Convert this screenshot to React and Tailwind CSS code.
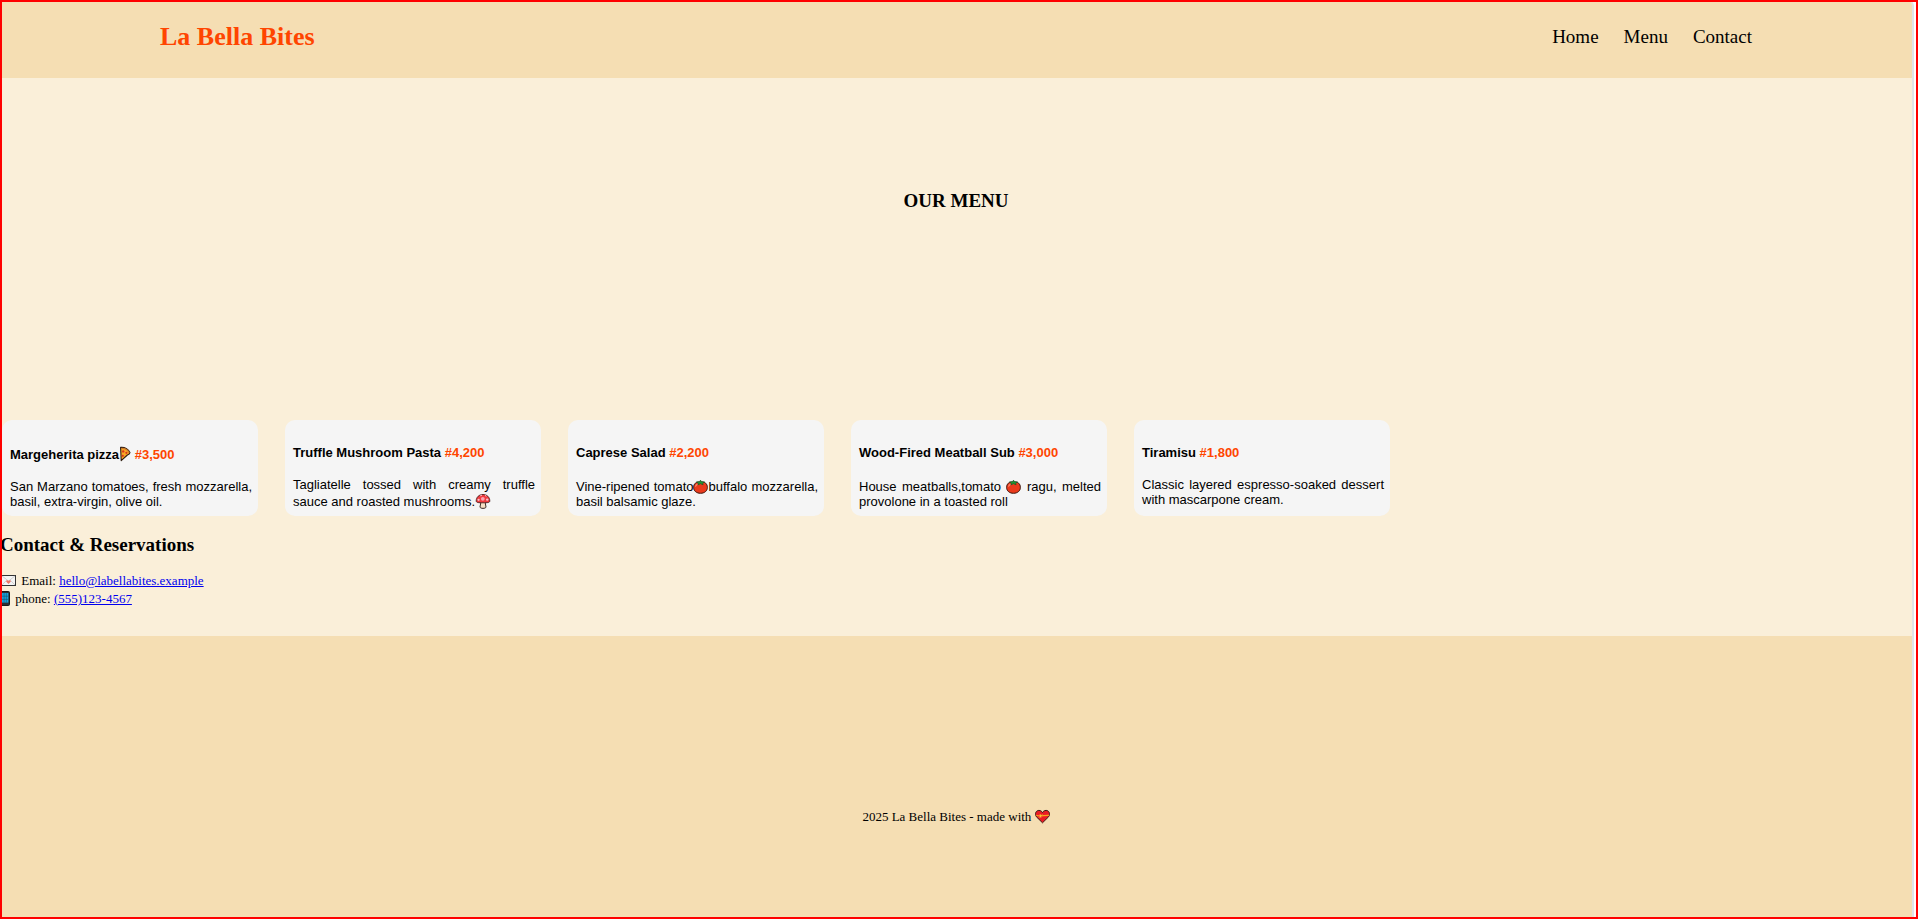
import React from "react";

function Pizza() {
  return (
    <svg viewBox="0 -1 12 17" className="inline h-[17px] w-[12px] align-[-3px]" aria-hidden="true">
      <path d="M1.6 1.4 C5.4 1 9.6 2.8 11 6.6 C10.6 8 9.6 8.6 8.4 9 L2.2 14.6 Z" fill="#f9a825" stroke="#2b1a10" strokeWidth="1.1" strokeLinejoin="round" />
      <path d="M2.4 2.4 C6 2.2 9 3.8 10.2 6.8" fill="none" stroke="#c9772a" strokeWidth="1.2" />
      <circle cx="4.2" cy="5.4" r="1.2" fill="#d8341c" />
      <circle cx="7.4" cy="6.8" r="1.1" fill="#d8341c" />
      <circle cx="3.8" cy="9.8" r="1.1" fill="#d8341c" />
    </svg>
  );
}

function Mushroom() {
  return (
    <svg viewBox="0 -1 16 17" className="inline h-[17px] w-[16px] align-[-3px]" aria-hidden="true">
      <path d="M6 8.5 L5 14 C5 15.8 11 15.8 11 14 L10 8.5 Z" fill="#f6dfc4" stroke="#3a2a24" strokeWidth="1" />
      <path d="M1.2 8 C1.2 4 4.2 1.5 8 1.5 C11.8 1.5 14.8 4 14.8 8 C14.8 9.6 12.6 9.8 8 9.8 C3.4 9.8 1.2 9.6 1.2 8 Z" fill="#f03a3e" stroke="#4a2020" strokeWidth="0.9" />
      <circle cx="7.8" cy="5.8" r="1.9" fill="#f9a3b0" />
      <circle cx="3.6" cy="6.8" r="1.1" fill="#f9c3cb" />
      <circle cx="12.2" cy="6.6" r="1.2" fill="#f9c3cb" />
      <path d="M5.2 2.8 L7 2.2 M10 2.4 L11.4 3.2" stroke="#f9c3cb" strokeWidth="1" />
    </svg>
  );
}

function Tomato() {
  return (
    <svg viewBox="0.5 -1.5 15 17" className="inline h-[17px] w-[15px] align-[-3px]" aria-hidden="true">
      <path d="M8 3.6 C12.6 2.8 14.9 5.6 14.9 8.9 C14.9 12.4 12 14.8 8 14.8 C4 14.8 1.1 12.4 1.1 8.9 C1.1 5.6 3.4 2.8 8 3.6 Z" fill="#ea3a1c" stroke="#3c1a12" strokeWidth="1" />
      <path d="M3.2 7.6 C3.6 6.4 4.2 6 5 5.8" fill="none" stroke="#ff8d70" strokeWidth="1.2" strokeLinecap="round" />
      <path d="M8 1.6 L8.8 3.2 L12 3.4 L10.2 4.8 L10.6 6.4 L8 5.2 L5.4 6.4 L5.8 4.8 L4 3.4 L7.2 3.2 Z" fill="#1f9a35" stroke="#174d20" strokeWidth="0.6" />
    </svg>
  );
}

function Envelope() {
  return (
    <svg viewBox="0 0 18 17" className="inline h-[17px] w-[18px] align-[-4px]" aria-hidden="true">
      <rect x="1.5" y="3.5" width="14" height="10" fill="#f4f4f4" stroke="#333" strokeWidth="1" />
      <path d="M2 4 L8.5 9 L15 4 M2 13 L6.5 8.4 M15 13 L10.5 8.4" fill="none" stroke="#c9c9c9" strokeWidth="0.9" />
      <path d="M8.5 12 L6.3 9.8 C5.7 8.4 7.5 7.6 8.5 8.8 C9.5 7.6 11.3 8.4 10.7 9.8 Z" fill="#ef7564" />
    </svg>
  );
}

function Phone() {
  return (
    <svg viewBox="0 0 12 17" className="inline h-[17px] w-[12px] align-[-4px]" aria-hidden="true">
      <rect x="0.5" y="1.5" width="9" height="14" rx="1" fill="#2b2f33" stroke="#1b1b1b" />
      <rect x="2" y="3" width="6.4" height="9.6" fill="#18a4dc" />
      <path d="M4.1 3 V12.6 M6.3 3 V12.6 M2 6.2 H8.4 M2 9.4 H8.4" stroke="#17526e" strokeWidth="0.6" />
    </svg>
  );
}

function Heart() {
  return (
    <svg viewBox="0.5 0 15 17" className="inline h-[17px] w-[15px] align-[-4px]" aria-hidden="true">
      <path d="M8 14.8 L1.9 8.8 C-0.2 5.6 1.6 2.4 4.4 2.4 C6.2 2.4 7.4 3.4 8 4.6 C8.6 3.4 9.8 2.4 11.6 2.4 C14.4 2.4 16.2 5.6 14.1 8.8 Z" fill="#ea1c24" stroke="#3a1a14" strokeWidth="1" strokeLinejoin="round" />
      <path d="M1.8 7.2 C5 9 10 7 14.4 7.4" fill="none" stroke="#f5a81c" strokeWidth="1.3" />
      <path d="M5.6 6 L6.4 9.8 M4.6 9.6 L7.8 6.4" stroke="#ffcf3a" strokeWidth="0.8" />
    </svg>
  );
}

const dishes = [
  {
    name: <>Margeherita pizza<Pizza /></>,
    price: "#3,500",
    text: "San Marzano tomatoes, fresh mozzarella, basil, extra-virgin, olive oil.",
  },
  {
    name: "Truffle Mushroom Pasta",
    price: "#4,200",
    text: <>Tagliatelle tossed with creamy truffle sauce and roasted mushrooms.<Mushroom /></>,
  },
  {
    name: "Caprese Salad",
    price: "#2,200",
    text: <>Vine-ripened tomato<Tomato />buffalo mozzarella, basil balsamic glaze.</>,
  },
  {
    name: "Wood-Fired Meatball Sub",
    price: "#3,000",
    text: <>House meatballs,tomato <Tomato /> ragu, melted provolone in a toasted roll</>,
  },
  {
    name: "Tiramisu",
    price: "#1,800",
    text: "Classic layered espresso-soaked dessert with mascarpone cream.",
  },
];

function DishCard({ dish }) {
  return (
    <article className="w-64 rounded-[10px] bg-[#f5f5f5] pt-[25px] pr-1.5 pb-[7px] pl-2 font-['Liberation_Sans',Arial,sans-serif] text-[13px] leading-[15px]">
      <h3 className="mb-[17px] font-bold">
        {dish.name} <span className="text-[#ff4500]">{dish.price}</span>
      </h3>
      <p className="text-justify">{dish.text}</p>
    </article>
  );
}

export default function App() {
  return (
    <div className="min-h-screen bg-white pr-1 font-['Liberation_Serif','Times_New_Roman',serif] text-black">
      <div className="flex min-h-screen flex-col overflow-hidden rounded-tr-md border-r-2 border-[#e3e3e6] bg-[#faefd9]">
        <header className="flex items-start justify-between bg-[#f5deb3] px-40 pt-[22px] pb-[26px]">
          <h1 className="text-[26px] leading-[30px] font-bold text-[#ff4500]">La Bella Bites</h1>
          <nav className="flex gap-[25px] pt-[3px] text-[19px] leading-6">
            <a href="#home">Home</a>
            <a href="#menu">Menu</a>
            <a href="#contact">Contact</a>
          </nav>
        </header>

        <main className="pb-7">
          <section id="menu">
            <h2 className="pt-28 pb-[208px] text-center text-[19px] leading-[22px] font-bold">OUR MENU</h2>
            <div className="flex flex-wrap gap-[27px] pl-0.5">
              {dishes.map((dish) => (
                <DishCard key={dish.price} dish={dish} />
              ))}
            </div>
          </section>

          <section id="contact" className="pt-[18px]">
            <h2 className="text-[19px] leading-[22px] font-bold">Contact &amp; Reservations</h2>
            <address className="pt-4 text-[13px] leading-[18px] not-italic">
              <p>
                <Envelope /> Email:{" "}
                <a href="mailto:hello@labellabites.example" className="text-[#0000ee] underline">hello@labellabites.example</a>
              </p>
              <p>
                <Phone /> phone:{" "}
                <a href="tel:5551234567" className="text-[#0000ee] underline">(555)123-4567</a>
              </p>
            </address>
          </section>
        </main>

        <footer className="grow bg-[#f5deb3] pt-[172px] pb-20 text-center text-[13px] leading-[18px]">
          2025 La Bella Bites - made with <Heart />
        </footer>
      </div>
      <div className="pointer-events-none fixed inset-0 border-2 border-[#ff0000]" />
    </div>
  );
}
